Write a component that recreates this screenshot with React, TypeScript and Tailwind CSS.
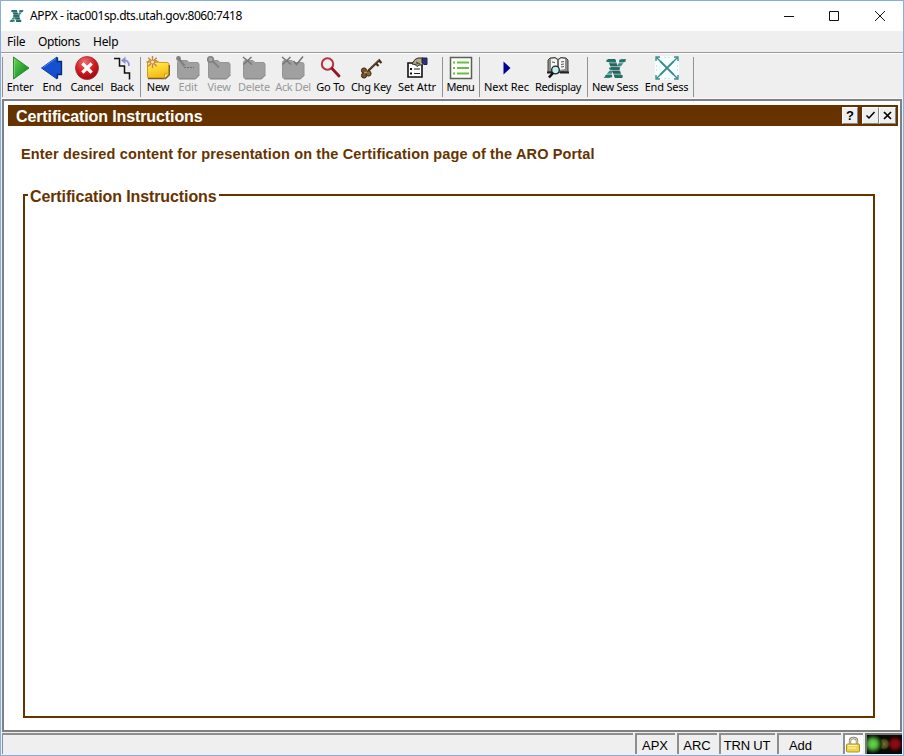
import React from "react";

type P = { className?: string };

function AppxLogo({ className = "" }: P) {
  return (
    <svg viewBox="0 0 24 20" className={className} fill="none">
      <path d="M4 0h8l2.500 7L18 0h6l-7.500 10L20 20h-8l-2.500-6.500L7 20H0l8-10Z" fill="#438a83" />
      <path d="M4.500 0h7.500l7.500 20H12Z" fill="#28625c" />
      <path d="M0 4h24M0 8h24M0 12h24M0 16h24" stroke="#efefef" strokeWidth=".9" opacity=".75" />
      <path d="M3 2h9.500M16.500 2h6.500M6 10h11M2 18h7M12 18h8" stroke="#1f746d" strokeWidth="2.200" />
    </svg>
  );
}

const EnterIcon = () => (
  <svg width="24" height="26" viewBox="0 0 24 26">
    <defs><linearGradient id="eg" x1="0" y1="0" x2="1" y2="1"><stop stopColor="#72d552" /><stop offset=".55" stopColor="#2aa336" /><stop offset="1" stopColor="#087a18" /></linearGradient></defs>
    <path d="M5.500 2L21 13 5.500 24Z" fill="url(#eg)" stroke="#2c8a34" strokeLinejoin="round" />
    <path d="M6.500 4V22" stroke="#8add72" opacity=".7" />
  </svg>
);
const EndIcon = () => (
  <svg width="24" height="26" viewBox="0 0 24 26">
    <path d="M1.500 13L17 2v4.500h4.500v13H17V24Z" fill="#1450d0" stroke="#0f3f9d" strokeLinejoin="round" />
    <path d="M17.500 2.500v4h4v13h-4v4" fill="none" stroke="#0b2a70" strokeWidth="1.300" />
    <path d="M3 12.500L16 3.500" stroke="#4a86ea" />
  </svg>
);
const CancelIcon = () => (
  <svg width="24" height="26" viewBox="0 0 24 26">
    <defs><radialGradient id="cg" cx=".4" cy=".25" r=".75"><stop stopColor="#ee7070" /><stop offset=".6" stopColor="#cf1a20" /><stop offset="1" stopColor="#990b14" /></radialGradient></defs>
    <circle cx="12" cy="13" r="11.500" fill="url(#cg)" stroke="#a83036" strokeWidth=".8" />
    <path d="M8.500 9.500l7 7M15.500 9.500l-7 7" stroke="#fff" strokeWidth="3.200" strokeLinecap="square" />
  </svg>
);
const BackIcon = () => (
  <svg width="24" height="26" viewBox="0 0 24 26" fill="none">
    <path d="M4 3.500h5.500v7.500h5v7h5v6.500" stroke="#111" strokeWidth="1.500" />
    <path d="M13 5.500c4-.5 6 1 6 5.500" stroke="#8d8de6" strokeWidth="1.800" />
    <path d="M15.500 1.500l-4.500 4 4.500 3.500Z" fill="#8d8de6" />
  </svg>
);

function Folder({ kind }: { kind: string }) {
  const fresh = kind === "new";
  return (
    <svg width="26" height="26" viewBox="0 0 26 26" fill="none">
      <defs><linearGradient id="fg" x1="0" y1="0" x2=".3" y2="1"><stop stopColor="#fff58e" /><stop offset=".5" stopColor="#fdd832" /><stop offset="1" stopColor="#f6b81a" /></linearGradient></defs>
      <path d="M2.500 7.500q0-2 2-2H12l2 2h8q2 0 2 2V20l-3.500 3.500h-16q-2 0-2-2Z" fill={fresh ? "url(#fg)" : "#a0a0a0"} stroke={fresh ? "#cf9a1d" : "#949494"} />
      {fresh && <path d="M3 23.500h17.500L24.300 20V10" stroke="#7d5f1b" strokeWidth="1.300" />}
      {fresh && <path d="M19.500 23.500V19H24Z" fill="#fff2a0" stroke="#b98a1c" strokeWidth=".8" />}
      {!fresh && <path d="M4 24h16.500l4-4" stroke="#858585" />}
      {fresh && <><path d="M7.500 1v12M1.500 7h12M3.300 2.800l8.400 8.400M11.700 2.800l-8.400 8.400" stroke="#c58446" strokeWidth="1.400" /><circle cx="7.500" cy="7" r="1.500" fill="#ffe9a5" /></>}
      {kind === "edit" && <><circle cx="3.500" cy="3.500" r="2.400" fill="#808080" /><path d="M4 4l5.500 7" stroke="#808080" strokeWidth="2.500" /><path d="M9 12.500h10" stroke="#6f6f6f" strokeDasharray="2 1" /></>}
      {kind === "view" && <><circle cx="4.500" cy="4.500" r="2.800" fill="#a6a6a6" stroke="#818181" strokeWidth="1.500" /><path d="M7 6.500l6 6" stroke="#818181" strokeWidth="1.800" /></>}
      {kind === "delete" && <path d="M2 2l9 7.500M10.500 2L2.500 9.500" stroke="#777" strokeWidth="1.600" />}
      {kind === "ack" && <path d="M2 2l9 7.500M10.500 2L2.500 9.500M13.500 6l3 3.500 6.500-8" stroke="#777" strokeWidth="1.600" />}
    </svg>
  );
}
const GoIcon = () => (
  <svg width="24" height="26" viewBox="0 0 24 26" fill="none">
    <circle cx="8.500" cy="9" r="5.700" fill="#f6eeee" stroke="#b3353f" strokeWidth="2" />
    <path d="M13 13.500l7 7.500" stroke="#941426" strokeWidth="2.800" strokeLinecap="round" />
  </svg>
);
const KeyIcon = () => (
  <svg width="24" height="26" viewBox="0 0 24 26" fill="none">
    <path d="M9 16L21 4.500M16.500 8l3 3M19.500 5l3 3" stroke="#3f2c1c" strokeWidth="2.200" />
    <circle cx="5" cy="15.500" r="2.600" fill="#75512a" stroke="#3f2a16" /><circle cx="9.500" cy="18.500" r="2.600" fill="#8b642f" stroke="#3f2a16" /><circle cx="5" cy="20.500" r="2.600" fill="#75512a" stroke="#3f2a16" />
    <path d="M5 18l3-1" stroke="#c39a5c" strokeWidth="1.500" /><path d="M10 14.500L20 5" stroke="#7b5833" strokeWidth=".8" />
  </svg>
);
const AttrIcon = () => (
  <svg width="24" height="26" viewBox="0 0 24 26" fill="none">
    <path d="M3 8h14v14H3Z" fill="#fff" stroke="#111" strokeWidth="1.600" />
    <path d="M5 13h2v2H5zM5 17.500h2v2H5z" fill="#111" /><path d="M9 14h6M9 18.500h6" stroke="#222" strokeWidth="1.200" />
    <path d="M7 9l3-4.500 3-1.500h5v7h-4l-2 1.500-2-2Z" fill="#b5ab86" stroke="#2b281d" />
    <path d="M11 7l4 2M10 9.500l3-1" stroke="#2b281d" strokeWidth=".8" /><path d="M17 3h5v6.500h-3l-2-2Z" fill="#2e3272" stroke="#1c1f50" />
  </svg>
);
const MenuIcon = () => (
  <svg width="24" height="26" viewBox="0 0 24 26" fill="none">
    <path d="M1.500 2.500h21v21h-21Z" fill="#fffff8" stroke="#566356" strokeWidth="1.500" />
    <path d="M4 7.500h2m2 0h12M4 13h2m2 0h12M4 18.500h2m2 0h12" stroke="#66bd50" strokeWidth="1.900" />
  </svg>
);
const NextIcon = () => <svg width="24" height="26" viewBox="0 0 24 26"><path d="M8.500 6.500l7 6.500-7 6.500Z" fill="#000093" /></svg>;
const RedisplayIcon = () => (
  <svg width="24" height="26" viewBox="0 0 24 26" fill="none">
    <path d="M2 5l2-2 5-.5 3 2 3-2 5 .5 2 2v12l-6-.5-4 1.500-4-1.500-6 .5Z" fill="#8b8b88" stroke="#444" />
    <path d="M5 4l4-.5 2 1.500v10l-6-1ZM13 5l2-1.500 4 .5v10l-6 1Z" fill="#f5f5f2" />
    <path d="M12 5v12M15 7l3-.5M15 9.500l3-.5M15 12l3-.5M6 7l3 .5" stroke="#555" />
    <path d="M1 17.500h6M14 17.500h9" stroke="#222" strokeWidth="1.800" /><circle cx="9.500" cy="15" r="3.800" fill="#bfeff0" stroke="#222" strokeWidth="1.300" />
    <path d="M7 18l-4 4.500" stroke="#111" strokeWidth="2.600" />
  </svg>
);
const EndSessionIcon = () => (
  <svg width="26" height="26" viewBox="0 0 26 26" fill="none">
    <path d="M1 1h24v24H1Z" fill="#f4ffff" />
    <path d="M6 6l14 14M20 6L6 20" stroke="#3f8a90" strokeWidth="1.800" />
    <path d="M2 6V2h4M3 3l3 3M20 2h4v4M23 3l-3 3M24 20v4h-4M23 23l-3-3M6 24H2v-4M3 23l3-3" stroke="#3f8a90" strokeWidth="1.400" />
    <path d="M10 2.500h2M14 2.500h2M10 23.500h2M14 23.500h2M2.500 10v2M2.500 14v2M23.500 10v2M23.500 14v2" stroke="#c5e5e6" />
  </svg>
);

function Item({ label, w, spacing = "tracking-[-0.22px]", disabled = false, children }: { label: string; w: string; spacing?: string; disabled?: boolean; children: React.ReactNode }) {
  return (
    <div className={`flex h-[44px] shrink-0 flex-col items-center ${w}`}>
      <div className="flex h-[26px] w-full items-center justify-center">{children}</div>
      <span className={`-mt-px block h-[16px] whitespace-nowrap font-['Noto_Sans',sans-serif] text-[11px] leading-[14px] ${spacing} ${disabled ? "text-[#999]" : "text-black"}`}>{label}</span>
    </div>
  );
}
const Separator = ({ className = "" }: P) => <div className={`mt-[2px] h-[40px] shrink-0 border-l border-[#929292] ${className}`} />;

function Status({ text, className }: { text: string; className: string }) {
  return <div className={`flex h-[21px] items-center justify-center border-l-2 border-t-2 border-[#8e8e8e] bg-[#efefef] pr-[2px] pt-[3px] font-['Liberation_Sans',sans-serif] text-[13px] ${className}`}>{text}</div>;
}

export default function App() {
  return (
    <div className="flex h-[756px] w-[904px] flex-col overflow-hidden border border-[#86aee2] bg-[#efefef] text-black">
      <header className="flex h-[30px] shrink-0 items-center bg-white">
        <AppxLogo className="ml-[8px] h-[12px] w-[15px]" />
        <span className="ml-[6px] whitespace-nowrap font-['Noto_Sans',sans-serif] text-[12px] tracking-[-0.4px]">APPX - itac001sp.dts.utah.gov:8060:7418</span>
        <div className="ml-auto flex w-[120px] items-center">
          <svg width="112" height="16" viewBox="0 0 112 16" fill="none" stroke="#111" strokeWidth="1">
            <path d="M1 8.500h10M46.500 3.500h9v9h-9ZM92 3l10 10M102 3L92 13" />
          </svg>
        </div>
      </header>
      <nav className="flex h-[22px] shrink-0 items-center border-b border-[#999] pl-[6px] font-['Noto_Sans',sans-serif] text-[12px]">
        <span className="w-[31px] tracking-[-0.2px]">File</span><span className="w-[55px] tracking-[-0.4px]">Options</span><span className="tracking-[-0.2px]">Help</span>
      </nav>
      <div className="flex h-[46px] shrink-0 items-start border-b border-t border-b-[#f9f9f9] border-t-white pl-[1px] pt-[1px]">
        <Separator className="w-[1px]" />
        <Item label="Enter" w="w-[34px]"><EnterIcon /></Item>
        <Item label="End" w="w-[30px]"><EndIcon /></Item>
        <Item label="Cancel" w="w-[40px]"><CancelIcon /></Item>
        <Item label="Back" w="w-[30px]"><BackIcon /></Item>
        <Separator className="ml-[3px] w-[3px]" />
        <Item label="New" w="w-[30px]"><Folder kind="new" /></Item>
        <Item label="Edit" w="w-[30px]" disabled><Folder kind="edit" /></Item>
        <Item label="View" w="w-[32px]" disabled><Folder kind="view" /></Item>
        <Item label="Delete" w="w-[38px]" disabled><Folder kind="delete" /></Item>
        <Item label="Ack Del" w="w-[40px]" spacing="tracking-[-0.4px]" disabled><Folder kind="ack" /></Item>
        <Item label="Go To" w="w-[35px]"><GoIcon /></Item>
        <Item label="Chg Key" w="w-[46px]"><KeyIcon /></Item>
        <Item label="Set Attr" w="w-[46px]" spacing="tracking-[-0.05px]"><AttrIcon /></Item>
        <Separator className="ml-[2px] w-[2px]" />
        <Item label="Menu" w="w-[33px]" spacing="tracking-[-0.5px]"><MenuIcon /></Item>
        <Separator className="ml-[2px] w-[2px]" />
        <Item label="Next Rec" w="w-[51px]" spacing="tracking-[-0.05px]"><NextIcon /></Item>
        <Item label="Redisplay" w="w-[52px]" spacing="tracking-[-0.35px]"><RedisplayIcon /></Item>
        <Separator className="ml-[3px] w-[2px]" />
        <Item label="New Sess" w="w-[52px]" spacing="tracking-[-0.3px]"><AppxLogo className="h-[19px] w-[24px]" /></Item>
        <Item label="End Sess" w="w-[51px]"><EndSessionIcon /></Item>
        <Separator className="ml-[1px] w-[1px]" />
      </div>
      <main className="mx-px flex h-[633px] shrink-0 flex-col border-2 border-[#808080] bg-white pl-[4px] pr-[2px] pt-[4px] font-['Liberation_Sans',sans-serif] font-bold text-[#663300]">
        <div className="flex h-[21px] shrink-0 items-center bg-[#663300] pl-[8px] pr-[2px] text-white">
          <h1 className="pt-[2px] text-[16px] leading-[19px] tracking-[-0.11px]">Certification Instructions</h1>
          <div className="ml-auto flex text-black">
            <button className="mr-[4px] flex h-[17px] w-[16px] items-center justify-center border border-b-[#888] border-l-white border-r-[#888] border-t-white bg-[#efefef] text-[13px] font-bold">?</button>
            <button className="flex h-[17px] w-[17px] items-center justify-center border border-b-[#888] border-l-white border-r-[#888] border-t-white bg-[#efefef]"><svg width="11" height="11" viewBox="0 0 11 11" fill="none" stroke="#000" strokeWidth="1.5"><path d="M1.500 5.500L4 8l5.500-6" /></svg></button>
            <button className="flex h-[17px] w-[17px] items-center justify-center border border-b-[#888] border-l-white border-r-[#888] border-t-white bg-[#efefef]"><svg width="11" height="11" viewBox="0 0 11 11" fill="none" stroke="#000" strokeWidth="1.700"><path d="M2 2l7 7M9 2L2 9" /></svg></button>
          </div>
        </div>
        <p className="ml-[13px] mt-[20px] h-[16px] whitespace-nowrap text-[14.5px] leading-[16px] tracking-[0.145px]">Enter desired content for presentation on the Certification page of the ARO Portal</p>
        <fieldset className="ml-[15px] mt-[25px] h-[531px] w-[852px] border-2 border-[#663300]">
          <legend className="ml-[3px] h-[16px] px-[2px] text-[16px] leading-[20px] tracking-[-0.11px]">Certification Instructions</legend>
        </fieldset>
      </main>
      <footer className="mt-[1px] flex h-[21px] shrink-0 gap-[2px] pl-[1px]">
        <div className="w-[631px] border-l border-t-2 border-[#8e8e8e]" />
        <Status text="APX" className="w-[40px]" />
        <Status text="ARC" className="w-[40px]" />
        <Status text="TRN UT" className="w-[56px] tracking-[-0.2px]" />
        <Status text="Add" className="w-[64px] !pr-[19px]" />
        <div className="flex w-[20px] items-center justify-center border-l-2 border-t-2 border-[#8e8e8e] bg-white">
          <svg width="18" height="18" viewBox="0 0 18 18" fill="none"><path d="M5 9V5q0-3 3.500-3T12 5v4" stroke="#85826f" strokeWidth="2.400" /><path d="M5 9V5q0-3 3.500-3T12 5v4" stroke="#dedbc8" /><rect x="1.500" y="8" width="13" height="8" rx="1" fill="#ecd44a" stroke="#ae9127" /><path d="M3 9.500h9M3 12h8" stroke="#fff6b8" /></svg>
        </div>
        <div className="flex w-[37px] items-center justify-around border-l-2 border-t-2 border-[#777] bg-[radial-gradient(circle_at_6px_9px,#6bd44f_0,#50b53c_4px,#17380f_8px,transparent_10px),radial-gradient(circle_at_17px_9px,#77702d_0,#4b491b_4px,transparent_6px),radial-gradient(circle_at_28px_9px,#8b1016_0,#7b0b10_4px,#290305_7px,transparent_9px)] bg-[#080a05]" />
      </footer>
    </div>
  );
}
